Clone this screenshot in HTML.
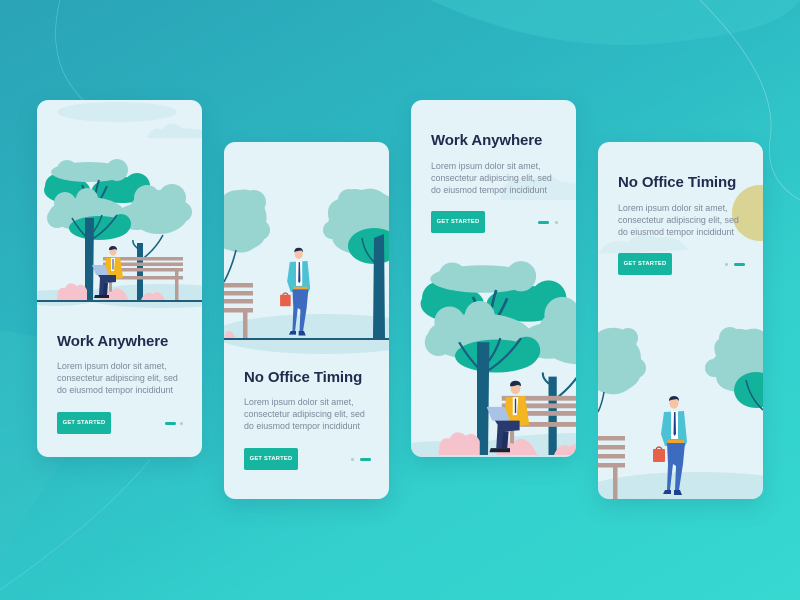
<!DOCTYPE html>
<html><head><meta charset="utf-8"><style>
*{margin:0;padding:0;box-sizing:border-box}
body{width:800px;height:600px;overflow:hidden;position:relative;font-family:"Liberation Sans",sans-serif;background:linear-gradient(150deg,#2aa3b6 0%,#2db9c3 40%,#33d0cd 70%,#36d8d0 100%)}
.bg{position:absolute;left:0;top:0}
.card{position:absolute;width:165px;height:357px;border-radius:11px;background:#e3f3f8;overflow:hidden;box-shadow:0 8px 22px rgba(20,90,110,.18)}
.card svg{position:absolute;left:0;top:0}
.t{position:absolute;left:20px;font-size:15px;font-weight:bold;color:#1f2b4c;letter-spacing:-.1px;white-space:nowrap}
.b{position:absolute;left:20px;font-size:8.9px;line-height:12px;color:#7f889b;white-space:nowrap}
.btn{position:absolute;left:20px;width:54px;height:22px;background:#15b59f;border-radius:2px;color:#fff;font-size:5.8px;font-weight:bold;text-align:center;line-height:22px;letter-spacing:.2px}
.pill{position:absolute;width:11px;height:3px;border-radius:2px;background:#15b59f}
.dot{position:absolute;width:3px;height:3px;border-radius:50%;background:#a8d2c8}
</style></head><body>
<svg class="bg" width="800" height="600">
<path d="M430 0 Q560 60 690 40 Q780 30 800 0Z" fill="#3cc8cc" opacity=".5"/>
<path d="M0 560 Q80 420 160 360 L0 330Z" fill="#3ec6c8" opacity=".3"/>
<path d="M60 0 Q40 80 110 120" stroke="#7fd9df" stroke-width=".6" fill="none" opacity=".6"/>
<path d="M700 0 Q780 80 770 140 Q765 180 800 200" stroke="#9be6e6" stroke-width=".6" fill="none" opacity=".7"/>
<path d="M0 590 Q100 520 150 460" stroke="#8be0e0" stroke-width=".6" fill="none" opacity=".5"/>
<defs>
<symbol id="stand" viewBox="0 0 40 105">
<ellipse cx="23" cy="9" rx="4.6" ry="5.6" fill="#f6c4a3"/>
<path d="M18 7 Q18 2 23 2 Q28 2 28 7 L26 5 L20 6Z" fill="#1f2b4c"/>
<path d="M13 18 L33 17 L36 48 L34 52 L14 52 L10 40Z" fill="#4cc2d4"/>
<path d="M20 17 L27 17 L27 45 L20 45Z" fill="#fff"/>
<path d="M23 18 L24.5 18 L25 40 L23.5 42 L22.5 40Z" fill="#1f3f8f"/>
<rect x="17" y="46" width="16" height="3" fill="#f0a531"/>
<path d="M16 49 L34 49 L32 70 L28 96 L24 96 L25 72 L22 70 L19 96 L16 96 L17 70Z" fill="#3d6bbf"/>
<path d="M14 96 L20 96 L20 100 L12 100Z M23 96 L29 96 L31 101 L23 101Z" fill="#1f3f8f"/>
<rect x="2" y="55" width="12" height="13" rx="1" fill="#e8604a"/>
<path d="M5 55 Q8 51 11 55" stroke="#c44c3a" stroke-width="1.2" fill="none"/>
</symbol>
<symbol id="sit" viewBox="0 0 34 54">
<ellipse cx="21" cy="6.5" rx="3.6" ry="4.3" fill="#f6c4a3"/>
<path d="M17 5 Q17 1 21 1 Q25 1 25 5 L23 4 L19 5Z" fill="#1f2b4c"/>
<path d="M14 13 L28 12 L31 33 L17 35 L13 28Z" fill="#f3b520"/>
<path d="M19 13 L23 13 L22 26 L19 26Z" fill="#fff"/>
<path d="M20.5 14 L21.5 14 L21.5 24 L20.5 25Z" fill="#1f3f8f"/>
<path d="M0 20 L13 20 L17 30 L4 30Z" fill="#a9c3e6"/>
<path d="M6 30 L24 30 L24 37 L13 38 L12 50 L7 50 L8 33Z" fill="#283a6e"/>
<path d="M12 38 L16 38 L15 50 L11 50Z" fill="#202f5e"/>
<path d="M3 50 L12 50 L12 53 L2 53Z M10 50 L17 50 L17 53 L9 53Z" fill="#1a2238"/>
</symbol>
<symbol id="scene1" viewBox="0 0 165 210">
<ellipse cx="125" cy="196" rx="80" ry="12" fill="#cbe8ee"/>
<ellipse cx="20" cy="198" rx="40" ry="8" fill="#cbe8ee"/>
<g fill="#13b39b"><ellipse cx="30" cy="90" rx="23" ry="13"/><ellipse cx="85" cy="90" rx="30" ry="13"/><circle cx="100" cy="86" r="13"/><circle cx="20" cy="86" r="12"/></g>
<g fill="#98d4d0"><ellipse cx="52" cy="72" rx="38" ry="10"/><circle cx="30" cy="70" r="10"/><circle cx="80" cy="70" r="11"/></g>
<path d="M57 120 Q56 98 62 80 M70 86 Q64 100 57 108 M45 85 Q50 95 55 110" stroke="#17607f" stroke-width="2" fill="none"/>
<g fill="#98d4d0"><ellipse cx="50" cy="114" rx="38" ry="17"/><circle cx="28" cy="103" r="11"/><circle cx="50" cy="99" r="11"/><circle cx="20" cy="118" r="10"/>
<ellipse cx="122" cy="112" rx="30" ry="22"/><circle cx="110" cy="98" r="13"/><circle cx="135" cy="98" r="14"/><circle cx="145" cy="112" r="10"/><ellipse cx="100" cy="117" rx="20" ry="13"/></g>
<g fill="#13b39b"><ellipse cx="62" cy="128" rx="30" ry="12"/><circle cx="84" cy="124" r="10"/></g>
<path d="M52 140 Q42 130 35 118 M54 140 Q70 130 80 115 M54 135 Q62 125 65 115" stroke="#17607f" stroke-width="1.6" fill="none"/>
<path d="M100 143 L106 143 L106 200 L100 200Z" fill="#17607f"/>
<path d="M103 150 Q95 145 96 140 M104 160 Q118 150 126 135" stroke="#17607f" stroke-width="1.5" fill="none"/>
<path d="M48 118 L57 118 L56 200 L48 200Z" fill="#17607f"/>
<g fill="#b99c96"><rect x="66" y="157" width="80" height="3.5"/><rect x="66" y="162.5" width="80" height="3.5"/><rect x="66" y="168" width="80" height="3.5"/><rect x="66" y="176" width="80" height="3.5"/><rect x="72" y="170" width="3" height="30"/><rect x="138" y="170" width="3.5" height="30"/></g>
<path d="M20 200 Q20 186 28 188 Q32 180 40 186 Q46 182 50 190 L50 200Z M62 200 Q66 188 74 192 Q80 184 88 193 L92 200Z M104 200 Q108 190 116 194 Q122 188 128 200Z" fill="#f6c3cc"/>
<use href="#sit" x="55" y="145" width="34" height="54"/>
</symbol>
</defs>
</svg>

<!-- Card 1 -->
<div class="card" style="left:37px;top:100px">
<svg width="165" height="357">
<ellipse cx="80" cy="12" rx="60" ry="10" fill="#d5edf2"/>
<path d="M110 38 Q115 25 125 30 Q132 18 145 28 L165 30 L165 38Z" fill="#d5edf2"/>
<use href="#scene1" x="0" y="0" width="165" height="210"/>
<rect x="0" y="200" width="165" height="2" fill="#1f5d7a"/>
</svg>
<div class="t" style="top:233px">Work Anywhere</div>
<div class="b" style="top:260px">Lorem ipsum dolor sit amet,<br>consectetur adipiscing elit, sed<br>do eiusmod tempor incididunt</div>
<div class="btn" style="top:312px">GET STARTED</div>
<div class="pill" style="left:128px;top:322px"></div><div class="dot" style="left:143px;top:322px"></div>
</div>

<!-- Card 2 -->
<div class="card" style="left:224px;top:142px">
<svg width="165" height="357">
<ellipse cx="100" cy="192" rx="110" ry="20" fill="#cbe8ee"/>
<g fill="#98d4d0"><path d="M-10 80 Q-8 48 15 48 Q32 45 38 62 Q46 72 40 88 Q44 100 30 106 Q20 114 5 108 Q-10 106 -10 80Z"/><circle cx="30" cy="60" r="12"/><circle cx="36" cy="88" r="10"/></g>
<path d="M12 108 Q8 125 0 140" stroke="#17607f" stroke-width="1.6" fill="none"/>
<g fill="#98d4d0"><path d="M105 78 Q100 60 118 56 Q122 44 138 48 Q150 44 160 52 L168 56 L168 110 L130 112 Q110 108 108 96 Q98 90 105 78Z"/><circle cx="125" cy="58" r="11"/><circle cx="108" cy="88" r="9"/></g>
<ellipse cx="150" cy="104" rx="26" ry="18" fill="#13b39b"/>
<path d="M150 96 L160 92 L161 196 L149 196Z" fill="#17607f"/>
<path d="M150 120 Q140 110 138 96" stroke="#17607f" stroke-width="1.5" fill="none"/>
<g fill="#b99c96"><rect x="0" y="141" width="29" height="4.5"/><rect x="0" y="149" width="29" height="4.5"/><rect x="0" y="157" width="29" height="4.5"/><rect x="0" y="166" width="29" height="4.5"/><rect x="19" y="170" width="4.5" height="26"/></g>
<path d="M0 196 Q2 186 8 190 L12 196Z" fill="#f6c3cc"/>
<use href="#stand" x="54" y="104" width="36" height="93"/>
<rect x="0" y="196" width="165" height="2" fill="#1f5d7a"/>
</svg>
<div class="t" style="top:227px">No Office Timing</div>
<div class="b" style="top:254px">Lorem ipsum dolor sit amet,<br>consectetur adipiscing elit, sed<br>do eiusmod tempor incididunt</div>
<div class="btn" style="top:306px">GET STARTED</div>
<div class="dot" style="left:127px;top:316px"></div><div class="pill" style="left:136px;top:316px"></div>
</div>

<!-- Card 3 -->
<div class="card" style="left:411px;top:100px">
<svg width="165" height="357">
<path d="M90 90 Q100 75 120 80 Q135 70 150 82 L165 84 L165 100 L90 100Z" fill="#d8eef3"/>
<g transform="translate(0,80) scale(1.375)"><use href="#scene1" x="0" y="0" width="165" height="210"/></g>
</svg>
<div class="t" style="top:32px">Work Anywhere</div>
<div class="b" style="top:60px">Lorem ipsum dolor sit amet,<br>consectetur adipiscing elit, sed<br>do eiusmod tempor incididunt</div>
<div class="btn" style="top:111px">GET STARTED</div>
<div class="pill" style="left:127px;top:121px"></div><div class="dot" style="left:144px;top:121px"></div>
</div>

<!-- Card 4 -->
<div class="card" style="left:598px;top:142px">
<svg width="165" height="357">
<circle cx="162" cy="71" r="28" fill="#dad494"/>
<path d="M0 112 Q10 95 30 100 Q40 88 60 96 Q80 92 90 108 L0 112Z" fill="#d8eef3"/>
<ellipse cx="100" cy="352" rx="120" ry="22" fill="#cbe8ee"/>
<g fill="#98d4d0"><path d="M-10 215 Q-8 188 12 186 Q28 184 34 198 Q46 208 42 224 Q46 238 32 246 Q20 256 4 250 Q-10 246 -10 215Z"/><circle cx="30" cy="196" r="10"/><circle cx="38" cy="226" r="10"/></g>
<path d="M6 250 Q4 262 0 270" stroke="#17607f" stroke-width="1.5" fill="none"/>
<g fill="#98d4d0"><path d="M118 214 Q112 198 128 194 Q134 184 148 188 Q160 184 168 192 L168 250 L140 250 Q118 248 118 234 Q106 226 118 214Z"/><circle cx="132" cy="196" r="11"/><circle cx="116" cy="226" r="9"/></g>
<ellipse cx="158" cy="248" rx="22" ry="18" fill="#13b39b"/>
<path d="M148 238 Q152 256 165 268" stroke="#17607f" stroke-width="1.6" fill="none"/>
<g fill="#b99c96"><rect x="0" y="294" width="27" height="4.5"/><rect x="0" y="303" width="27" height="4.5"/><rect x="0" y="312" width="27" height="4.5"/><rect x="0" y="321" width="27" height="4.5"/><rect x="15" y="325" width="4.5" height="32"/></g>
<use href="#stand" x="53" y="252" width="40" height="105"/>
</svg>
<div class="t" style="top:32px">No Office Timing</div>
<div class="b" style="top:60px">Lorem ipsum dolor sit amet,<br>consectetur adipiscing elit, sed<br>do eiusmod tempor incididunt</div>
<div class="btn" style="top:111px">GET STARTED</div>
<div class="dot" style="left:127px;top:121px"></div><div class="pill" style="left:136px;top:121px"></div>
</div>
</body></html>
